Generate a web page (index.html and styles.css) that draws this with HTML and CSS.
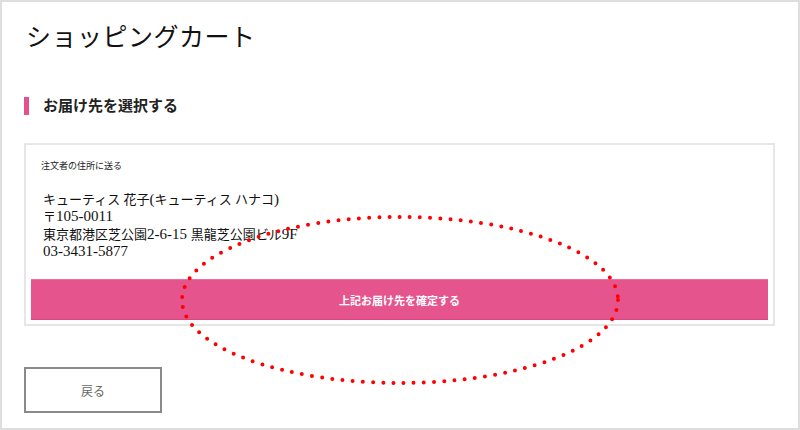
FILE: index.html
```html
<!DOCTYPE html>
<html lang="ja">
<head>
<meta charset="utf-8">
<title>ショッピングカート</title>
<link rel="stylesheet" href="styles.css">
</head>
<body>
<div class="page">
  <h1 class="title">ショッピングカート</h1>
  <h2 class="section-heading">お届け先を選択する</h2>
  <div class="card">
    <p class="card-label">注文者の住所に送る</p>
    <address class="address">
      <span><span class="jp">キューティス 花子</span>(<span class="jp">キューティス ハナコ</span>)</span>
      <span><span class="jp">〒</span>105-0011</span>
      <span><span class="jp">東京都港区芝公園</span>2-6-15 <span class="jp">黒龍芝公園ビル</span>9F</span>
      <span>03-3431-5877</span>
    </address>
    <button class="confirm-btn" type="button">上記お届け先を確定する</button>
  </div>
  <button class="back-btn" type="button">戻る</button>
  <svg class="highlight" width="450" height="180" viewBox="0 0 450 180" aria-hidden="true">
    <ellipse cx="225" cy="90" rx="218" ry="83" fill="none" stroke="#ff0000" stroke-width="4" stroke-linecap="round" stroke-dasharray="0 10.2"/>
  </svg>
</div>
</body>
</html>
```

FILE: styles.css
```css
* { box-sizing: border-box; }
html, body { margin: 0; padding: 0; background: #fff; }
body { font-family: "Liberation Serif", "Noto Sans CJK JP", serif; color: #111; }

.page {
  position: relative;
  width: 800px;
  height: 430px;
  border: 2px solid #dedede;
  padding: 23px 23px 0 22px;
  display: flex;
  flex-direction: column;
  align-items: flex-start;
}

.title {
  margin: 0;
  padding-left: 2px;
  font-size: 25px;
  line-height: 25px;
  font-weight: normal;
  letter-spacing: 0.5px;
  color: #111;
}

.section-heading {
  margin: 47px 0 0;
  height: 18px;
  line-height: 18px;
  border-left: 5px solid #e5508a;
  padding-left: 14px;
  font-size: 15px;
  font-weight: bold;
  color: #222;
}

.card {
  align-self: stretch;
  margin-top: 28px;
  border: 2px solid #e6e6e6;
  padding: 15px 5px 4px;
  display: flex;
  flex-direction: column;
}

.card-label {
  margin: 0;
  padding-left: 10px;
  font-family: "Noto Sans CJK JP", sans-serif;
  font-size: 9px;
  line-height: 12px;
  color: #222;
}

.address {
  margin-top: 19px;
  padding-left: 12px;
  font-style: normal;
  font-size: 15px;
  line-height: 17.3px;
  display: flex;
  flex-direction: column;
  color: #111;
}

.address .jp {
  font-size: 13px;
}

.confirm-btn {
  margin-top: 19px;
  height: 41px;
  border: 0;
  border-top: 1px solid #ec6f9f;
  border-bottom: 1px solid #de4580;
  background: #e5548c;
  color: #fff;
  font-family: "Noto Sans CJK JP", sans-serif;
  font-size: 11px;
  font-weight: bold;
  padding: 0;
}

.back-btn {
  margin-top: 41px;
  width: 138px;
  height: 46px;
  background: #fff;
  border: 2px solid #8a8a8a;
  color: #666;
  font-family: "Noto Sans CJK JP", sans-serif;
  font-size: 12px;
  padding: 0;
}

.highlight {
  position: absolute;
  left: 173px;
  top: 208px;
  pointer-events: none;
}
```
